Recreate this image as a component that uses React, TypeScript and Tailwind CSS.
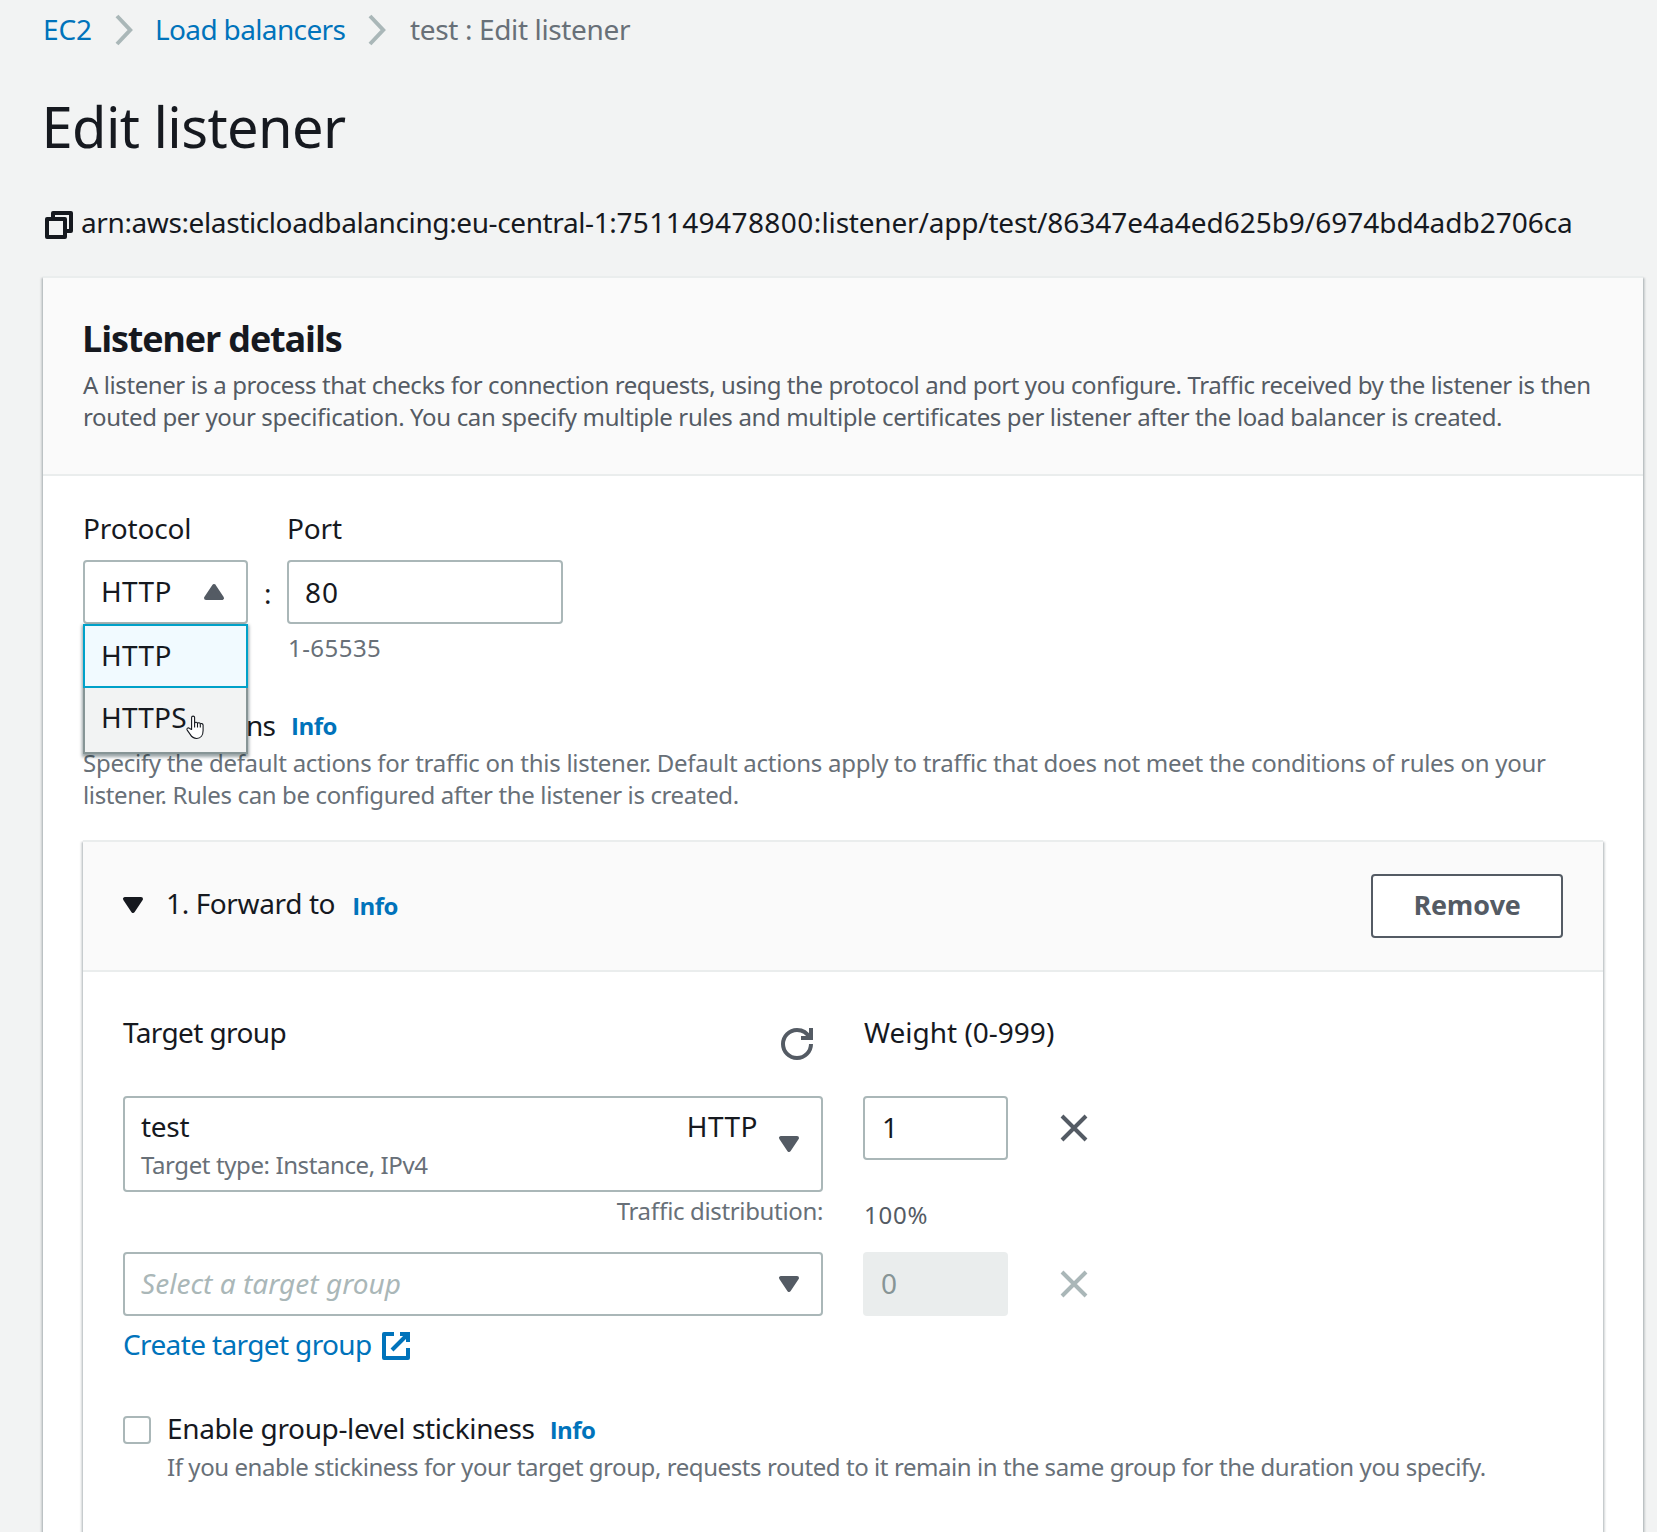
import type { ReactNode } from "react";

const STROKE = { fill: "none", stroke: "currentColor", strokeWidth: 2, strokeLinejoin: "round" as const };

function Chevron({ className }: { className: string }) {
  return (
    <svg viewBox="0 0 20 32" className={`h-8 w-5 shrink-0 text-[#aab7b8] ${className}`}>
      <path d="M3 2 L16.2 16 L3 30" fill="none" stroke="currentColor" strokeWidth="4" />
    </svg>
  );
}

function CopyIcon() {
  return (
    <svg viewBox="0 0 16 16" className="mt-[5px] h-8 w-8 shrink-0 text-[#16191f]" {...STROKE}>
      <path d="M2 5h9v9H2z" />
      <path d="M5 5V2h9v9h-3" />
    </svg>
  );
}

function ExternalIcon() {
  return (
    <svg viewBox="0 0 16 16" className="mt-1 h-8 w-8 shrink-0" {...STROKE} strokeLinejoin="miter">
      <path d="M10 2h4v4" />
      <path d="M6 10l8-8" />
      <path d="M14 9.048V14H2V2h5" strokeLinejoin="round" />
    </svg>
  );
}

function RefreshIcon() {
  return (
    <svg viewBox="0 0 16 16" className="h-8 w-8 shrink-0 text-[#545b64]" {...STROKE} strokeLinejoin="miter">
      <path d="M15 8c0 3.87-3.13 7-7 7s-7-3.13-7-7 3.13-7 7-7c2.79 0 5.2 1.63 6.33 4" />
      <path d="M10 5h5V0" />
    </svg>
  );
}

function CloseIcon({ className }: { className: string }) {
  return (
    <svg viewBox="0 0 16 16" className={`h-8 w-8 shrink-0 ${className}`} {...STROKE}>
      <path d="M2 2l12 12M14 2L2 14" />
    </svg>
  );
}

function Caret({ className }: { className: string }) {
  return (
    <svg viewBox="0 0 16 16" className={`h-8 w-8 shrink-0 ${className}`} {...STROKE} fill="currentColor">
      <path d="M4 5h8l-4 6-4-6z" />
    </svg>
  );
}

function HandCursor() {
  return (
    <svg viewBox="0 0 19 25" className="absolute top-[91px] left-[103px] h-[25px] w-[19px]">
      <path
        d="M5.6 14.5V2.6c0-2 3-2 3 0v5.6c.3-1.3 2.8-1.2 2.9.3.4-1.1 2.7-1 2.8.6.5-.9 2.8-.8 2.8 1.2v5.2c0 4.600-2.400 8-6.400 8-3.600 0-5.200-1.900-6.500-4.100L1.200 15.100c-.9-1.700 1-3 2.300-1.700z"
        fill="#fff"
        stroke="#16191f"
        strokeWidth="1.100"
        strokeLinejoin="round"
      />
      <path d="M8.600 8v4.500M11.500 8.500v4M14.300 9.300v3.200" fill="none" stroke="#16191f" strokeWidth="1.100" />
    </svg>
  );
}

function Info({ className }: { className: string }) {
  return (
    <a className={`h-11 font-['Open_Sans',sans-serif] text-2xl leading-[44px] font-bold tracking-[-0.54px] text-[#0073bb] ${className}`}>
      Info
    </a>
  );
}

function Hint({ className, children }: { className: string; children: ReactNode }) {
  return <div className={`text-2xl leading-8 ${className}`}>{children}</div>;
}

const CARD =
  "border-t-2 border-[#eaeded] bg-white shadow-[0_2px_2px_0_rgba(0,28,36,0.3),2px_2px_2px_0_rgba(0,28,36,0.15),-2px_2px_2px_0_rgba(0,28,36,0.15)]";
const FIELD = "rounded-[4px] border-2 border-[#aab7b8] bg-white";

export default function App() {
  return (
    <div className="h-[1532px] w-[1657px] overflow-hidden bg-[#f2f3f3] pt-[7px] pl-[43px] font-['Noto_Sans',sans-serif] text-[28px] leading-[44px] whitespace-nowrap text-[#16191f] [font-feature-settings:'liga']">
      <nav className="flex h-11 items-center text-[#0073bb]">
        <a className="w-[71px] tracking-[-0.1px]">EC2</a>
        <Chevron className="mt-[2px]" />
        <a className="ml-[21px] w-[212px] tracking-[-0.64px]">Load balancers</a>
        <Chevron className="mt-[2px]" />
        <span className="ml-[23px] tracking-[-0.36px] text-[#687078]">test : Edit listener</span>
      </nav>

      <h1 className="mt-[41px] -ml-[1.5px] h-[68px] text-[56px] leading-[69px] tracking-[-0.58px]">Edit listener</h1>

      <div className="mt-10 flex h-11 items-center">
        <CopyIcon />
        <span className="ml-[6px] tracking-[-0.39px]">arn:aws:elasticloadbalancing:eu-central-1:</span>
        <span className="tracking-[0.42px]">751149478800:</span>
        <span className="tracking-[-0.2px]">listener/app/test/</span>
        <span className="tracking-[-0.02px]">86347e4a4ed625b9/6974bd4adb2706ca</span>
      </div>

      <section className={`mt-[32px] h-[1300px] w-[1600px] ${CARD}`}>
        <header className="h-[198px] border-b-2 border-[#eaeded] bg-[#fafafa] px-10 pt-[39px]">
          <h2 className="-ml-px h-11 font-['Open_Sans',sans-serif] text-4xl leading-[44px] font-bold tracking-[-1.16px]">
            Listener details
          </h2>
          <div className="mt-[8px] text-2xl leading-8 text-[#545b64]">
            <p className="tracking-[-0.413px]">
              A listener is a process that checks for connection requests, using the protocol and port you configure. Traffic received by the listener is then
            </p>
            <p className="tracking-[-0.363px]">
              routed per your specification. You can specify multiple rules and multiple certificates per listener after the load balancer is created.
            </p>
          </div>
        </header>

        <div className="px-10 pt-[30px]">
          <div className="flex h-[157px]">
            <div className="relative w-[165px]">
              <div className="h-11 leading-[45px] tracking-[-0.15px]">Protocol</div>
              <div className={`mt-[10px] flex h-16 items-center justify-between pr-4 pl-4 ${FIELD}`}>
                <span className="-mt-[2px] tracking-[0.35px]">HTTP</span>
                <Caret className="rotate-180 text-[#545b64]" />
              </div>
              <div className="absolute top-[118px] left-0 z-10 w-[165px] bg-[#f2f3f3] shadow-[0_2px_3px_1px_rgba(0,28,36,0.4)]">
                <div className="h-16 border-2 border-[#00a1c9] bg-[#f1faff] pt-[7px] pl-4 tracking-[0.35px]">HTTP</div>
                <div className="h-[66px] border-x-2 border-b-2 border-[#879596] pt-[7px] pl-4 tracking-[0.2px]">HTTPS</div>
                <HandCursor />
              </div>
            </div>
            <span className="mt-[65px] ml-[16px] w-[23px]">:</span>
            <div className="w-[276px]">
              <div className="h-11 leading-[45px] tracking-[-0.15px]">Port</div>
              <div className={`mt-[10px] h-16 pt-2 pl-4 tracking-[1px] ${FIELD}`}>80</div>
              <Hint className="mt-[8px] ml-px text-[#687078] tracking-[0.45px]">1-65535</Hint>
            </div>
          </div>

          <div className="mt-[40px] flex h-11">
            <div className="flex w-[192px] justify-end tracking-[-0.8px]">ns</div>
            <Info className="mt-px ml-4" />
          </div>
          <div className="text-2xl leading-8 text-[#687078]">
            <p className="tracking-[-0.275px]">
              Specify the default actions for traffic on this listener. Default actions apply to traffic that does not meet the conditions of rules on your
            </p>
            <p className="tracking-[-0.37px]">listener. Rules can be configured after the listener is created.</p>
          </div>

          <section className={`mt-[29px] h-[760px] ${CARD}`}>
            <header className="flex h-[130px] items-center border-b-2 border-[#eaeded] bg-[#fafafa] pr-10 pl-[34px]">
              <Caret className="-mt-[3px] text-[#16191f]" />
              <span className="-mt-[6px] ml-[17px] tracking-[-0.38px]">1. Forward to</span>
              <Info className="ml-[17px]" />
              <button className="ml-auto h-16 w-48 rounded-[4px] border-2 border-[#545b64] bg-white pb-[2px] text-center font-['Open_Sans',sans-serif] text-[27px] font-bold tracking-[-0.2px] text-[#545b64]">
                Remove
              </button>
            </header>

            <div className="px-10 pt-[38px]">
              <div className="flex">
                <div className="w-[700px]">
                  <div className="flex h-11 justify-between pr-[10px]">
                    <span className="tracking-[-0.61px]">Target group</span>
                    <div className="pt-[18px]">
                      <RefreshIcon />
                    </div>
                  </div>
                  <div className={`mt-[42px] flex h-24 pr-4 pl-4 ${FIELD}`}>
                    <div className="flex-1 pt-[6px]">
                      <div className="h-11 tracking-[-0.3px]">test</div>
                      <Hint className="pt-px text-[#687078] tracking-[-0.4px]">Target type: Instance, IPv4</Hint>
                    </div>
                    <span className="mt-[6px] tracking-[0.45px]">HTTP</span>
                    <Caret className="mt-[30px] ml-[15px] text-[#545b64]" />
                  </div>
                  <Hint className="mt-[3px] text-right text-[#687078] tracking-[-0.35px]">Traffic distribution:</Hint>
                  <div className={`mt-[25px] flex h-16 items-center justify-between px-4 ${FIELD}`}>
                    <span className="-mt-[2px] tracking-[0.02px] text-[#aab7b8] italic">Select a target group</span>
                    <Caret className="text-[#545b64]" />
                  </div>
                </div>

                <div className="ml-10 w-[145px]">
                  <div className="ml-px h-11">Weight (0-999)</div>
                  <div className={`mt-[42px] h-16 pt-[7px] pl-[17px] ${FIELD}`}>1</div>
                  <Hint className="mt-[39px] ml-px text-[#545b64] tracking-[0.8px]">100%</Hint>
                  <div className="mt-[21px] h-16 rounded-[4px] bg-[#eaeded] pt-[9px] pl-[18px] text-[#879596]">0</div>
                </div>

                <div className="ml-[50px] flex flex-col gap-[124px] pt-[102px]">
                  <CloseIcon className="text-[#545b64]" />
                  <CloseIcon className="text-[#aab7b8]" />
                </div>
              </div>

              <a className="mt-[6px] flex h-11 items-center gap-[8px] text-[#0073bb]">
                <span className="tracking-[-0.63px]">Create target group</span>
                <ExternalIcon />
              </a>

              <div className="mt-10 flex">
                <div className="mt-[10px] h-7 w-7 rounded-[4px] border-2 border-[#aab7b8] bg-white" />
                <div className="ml-[16px]">
                  <div className="flex h-11">
                    <span className="leading-[45px] tracking-[-0.36px]">Enable group-level stickiness</span>
                    <Info className="mt-[2px] ml-[15px]" />
                  </div>
                  <Hint className="mt-px text-[#687078] tracking-[-0.425px]">
                    If you enable stickiness for your target group, requests routed to it remain in the same group for the duration you specify.
                  </Hint>
                </div>
              </div>
            </div>
          </section>
        </div>
      </section>
    </div>
  );
}
